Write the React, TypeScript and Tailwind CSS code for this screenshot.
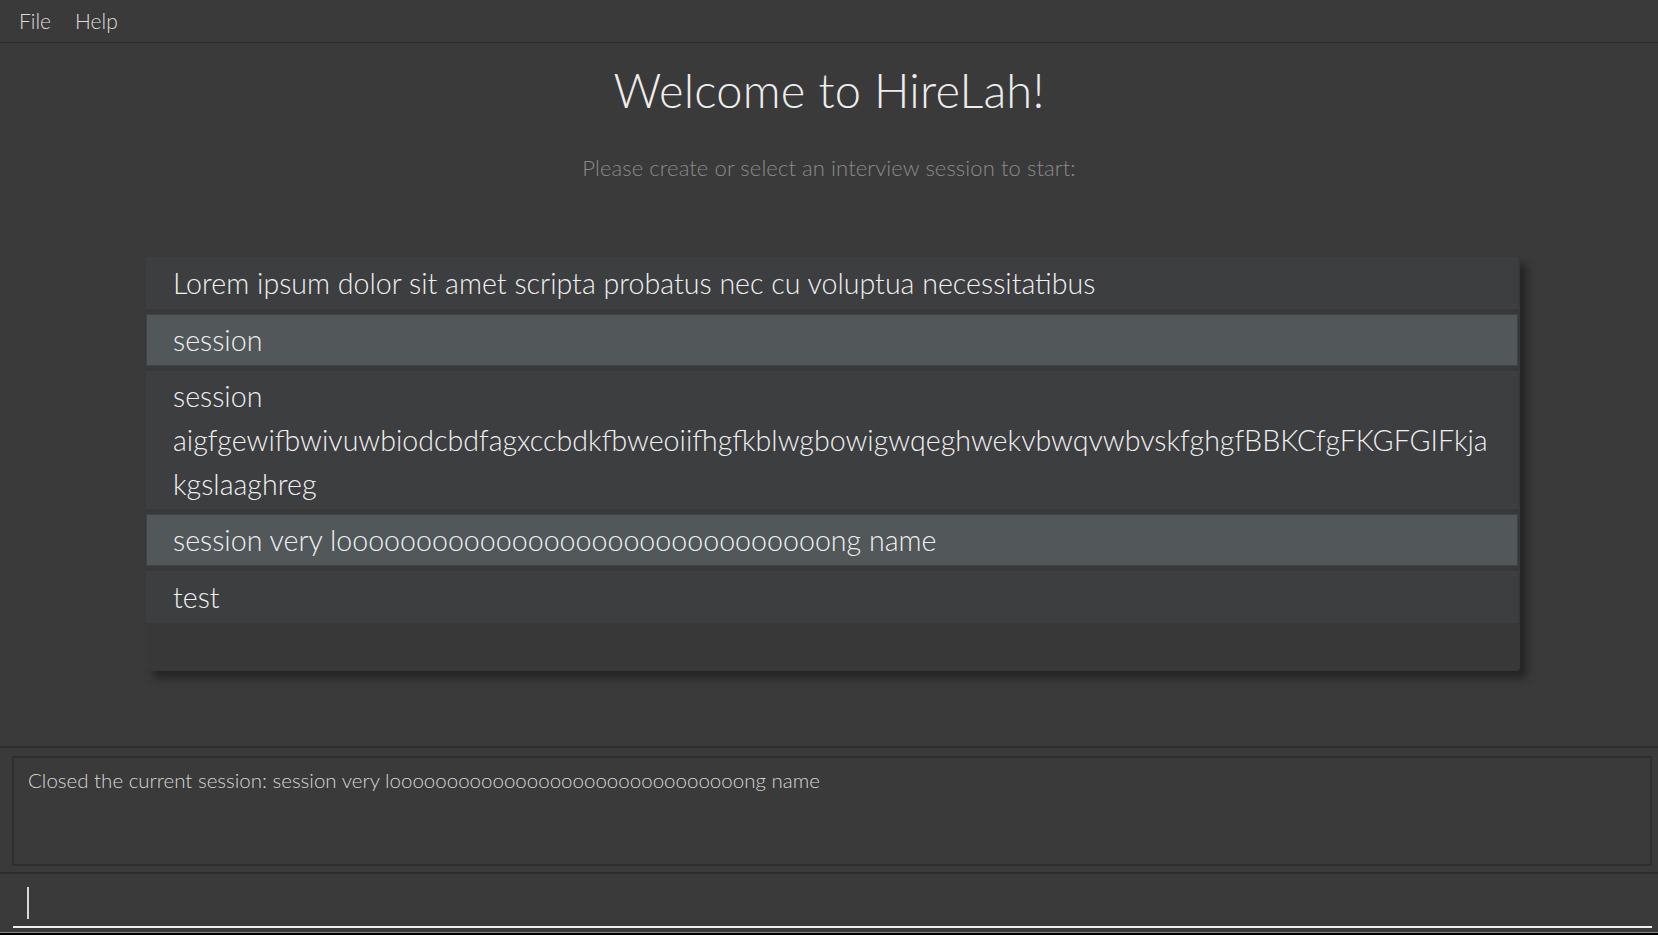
import React from "react";

const items = [
  { lines: ["Lorem ipsum dolor sit amet scripta probatus nec cu voluptua necessitatibus"], selected: false, tall: false },
  { lines: ["session"], selected: true, tall: false },
  {
    lines: [
      "session",
      "aigfgewifbwivuwbiodcbdfagxccbdkfbweoiifhgfkblwgbowigwqeghwekvbwqvwbvskfghgfBBKCfgFKGFGIFkja",
      "kgslaaghreg",
    ],
    selected: false,
    tall: true,
  },
  { lines: ["session very looooooooooooooooooooooooooooooong name"], selected: true, tall: false },
  { lines: ["test"], selected: false, tall: false },
];

export default function App() {
  return (
    <div
      className="w-[1658px] h-[935px] bg-[#3a3a3a] flex flex-col overflow-hidden text-[#e6e6e6]"
      style={{ fontFamily: "Lato, 'Open Sans', 'Noto Sans', sans-serif" }}
    >
      {/* Menu bar */}
      <div className="h-[43px] shrink-0 flex items-center gap-[24px] pl-[19px] border-b border-[#2c2c2c] text-[21px] font-light text-[#dcdcdc]">
        <span>File</span>
        <span>Help</span>
      </div>

      {/* Main area */}
      <div className="h-[703px] shrink-0 flex flex-col items-center pt-[16px]">
        <div className="text-[47px] leading-[62px] font-light text-[#ededed] tracking-[0.2px]">Welcome to HireLah!</div>
        <div className="mt-[33px] text-[22px] leading-[28px] font-light text-[#8a8a8a] tracking-[0.1px]">
          Please create or select an interview session to start:
        </div>
        <div className="mt-[75px] self-start ml-[146px] w-[1374px] h-[414px] bg-[#383838] rounded-[4px] shadow-[7px_7px_8px_rgba(0,0,0,0.38)] flex flex-col gap-[5px]">
          {items.map((it, i) => (
            <div
              key={i}
              className={
                it.selected
                  ? "w-[1372px] bg-[#52575a] border border-[#3f4346] pl-[26px] py-[3px] text-[28.6px] leading-[44px] font-light text-[#f0f0f0]"
                  : it.tall
                  ? "w-[1372px] bg-[#3d3e40] pl-[27px] py-[3px] text-[28.6px] leading-[44px] font-light text-[#f0f0f0]"
                  : "w-[1372px] bg-[#3d3e40] pl-[27px] py-[4px] text-[28.6px] leading-[44px] font-light text-[#f0f0f0]"
              }
            >
              {it.lines.map((l, j) => (
                <div key={j} className="whitespace-nowrap">
                  {l}
                </div>
              ))}
            </div>
          ))}
        </div>
      </div>

      <div className="h-[2px] shrink-0 bg-[#2d2d2d]" />

      {/* Result display */}
      <div className="h-[124px] shrink-0 pt-[8px] pl-[12px] pr-[6px]">
        <div className="h-[110px] border-2 border-[#2e2e2e] px-[14px] pt-[8px] text-[20.5px] leading-[28px] font-light text-[#d6d6d6]">
          Closed the current session: session very looooooooooooooooooooooooooooooong name
        </div>
      </div>

      <div className="h-[2px] shrink-0 bg-[#2d2d2d]" />

      {/* Command box */}
      <div className="h-[58px] shrink-0 flex flex-col pl-[13px] pr-[6px]">
        <div className="h-[52px] pt-[13px] pl-[14px]">
          <div className="w-[2px] h-[32px] bg-[#d8d8d8]" />
        </div>
        <div className="h-[2px] bg-[#f0f0f0]" />
      </div>

      <div className="h-[3px] shrink-0 bg-black border-t border-[#8a8a8a]" />
    </div>
  );
}
